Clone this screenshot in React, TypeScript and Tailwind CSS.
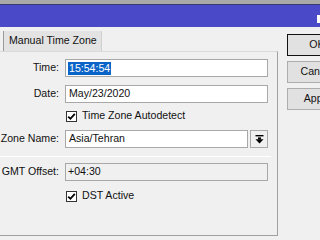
import React from "react";

const font = { fontFamily: '"Liberation Sans", Arial, sans-serif' };

function Check() {
  return (
    <div className="w-[11px] h-[11px] border border-[#333] bg-white flex items-center justify-center">
      <svg width="9" height="9" viewBox="0 0 9 9">
        <path d="M1.2 4.6 L3.4 6.8 L7.8 1.8" stroke="#000" strokeWidth="1.8" fill="none" />
      </svg>
    </div>
  );
}

function Label({ children }: { children: React.ReactNode }) {
  return <div className="w-[60px] shrink-0 text-right pr-[1px] whitespace-nowrap">{children}</div>;
}

export default function App() {
  return (
    <div className="w-[320px] h-[240px] overflow-hidden bg-[#f0f0f0] text-[10.6px] text-[#111] flex flex-col" style={font}>
      <div className="h-[4px] bg-[#a9a9a9] shrink-0" />
      <div className="h-[1px] bg-[#3a3a6a] shrink-0" />
      <div className="h-[22px] bg-[#4a4ac8] shrink-0 relative">
        <div className="absolute right-0 top-[10px] w-[3px] h-[8px] bg-white" />
      </div>
      <div className="flex flex-1">
        <div className="w-[278px] shrink-0 flex flex-col">
          <div className="pt-[4px] pl-[3px] flex">
            <div className="h-[20px] w-[99px] bg-[#e3e3e3] border-l border-[#9a9a9a] border-r border-r-[#d0d0d0] flex items-center pl-[5px]">
              Manual Time Zone
            </div>
          </div>
          <div className="h-[185px] border-t border-[#dadada] border-r border-r-[#a0a0a0] border-b border-b-[#a0a0a0] flex flex-col pt-[7px]">
            <div className="flex items-center gap-[5px] h-[18px]">
              <Label>Time:</Label>
              <div className="w-[203px] h-[18px] bg-white border border-[#a8a8a8] flex items-center pl-[2px]">
                <span className="bg-[#0a64c8] text-white px-[1px] leading-[13px]">15:54:54</span>
              </div>
            </div>
            <div className="flex items-center gap-[5px] h-[18px] mt-[8px]">
              <Label>Date:</Label>
              <div className="w-[203px] h-[18px] bg-white border border-[#a8a8a8] flex items-center pl-[3px]">
                May/23/2020
              </div>
            </div>
            <div className="flex items-center h-[12px] mt-[7px] pl-[66px] gap-[5px]">
              <Check />
              <span>Time Zone Autodetect</span>
            </div>
            <div className="flex items-center gap-[5px] h-[18px] mt-[8px]">
              <Label>Zone Name:</Label>
              <div className="w-[183px] h-[18px] bg-white border border-[#a8a8a8] flex items-center pl-[3px]">
                Asia/Tehran
              </div>
              <div className="w-[18px] h-[18px] -ml-[3px] bg-[#f0f0f0] border border-[#a8a8a8] flex items-center justify-center">
                <svg width="9" height="9" viewBox="0 0 9 9">
                  <rect x="0.5" y="0" width="8" height="1.4" fill="#000" />
                  <rect x="3" y="2.4" width="3" height="2" fill="#000" />
                  <path d="M0.5 4.2 L8.5 4.2 L4.5 8.6 Z" fill="#000" />
                </svg>
              </div>
            </div>
            <div className="h-[1px] bg-[#e2e2e2] mt-[8px] mr-[6px] border-b border-white" />
            <div className="flex items-center gap-[5px] h-[18px] mt-[6px]">
              <Label>GMT Offset:</Label>
              <div className="w-[203px] h-[18px] bg-[#f0f0f0] border border-[#a8a8a8] flex items-center pl-[2px]">
                +04:30
              </div>
            </div>
            <div className="flex items-center h-[12px] mt-[9px] pl-[66px] gap-[5px]">
              <Check />
              <span>DST Active</span>
            </div>
          </div>
        </div>
        <div className="flex flex-col pl-[9px] pt-[7px] gap-[5px]">
          <div className="w-[60px] h-[22px] bg-[#e1e1e1] border border-[#111] flex items-center justify-center">OK</div>
          <div className="w-[60px] h-[22px] bg-[#e1e1e1] border border-[#adadad] flex items-center justify-center">Cancel</div>
          <div className="w-[60px] h-[22px] bg-[#e1e1e1] border border-[#adadad] flex items-center justify-center">Apply</div>
        </div>
      </div>
    </div>
  );
}
